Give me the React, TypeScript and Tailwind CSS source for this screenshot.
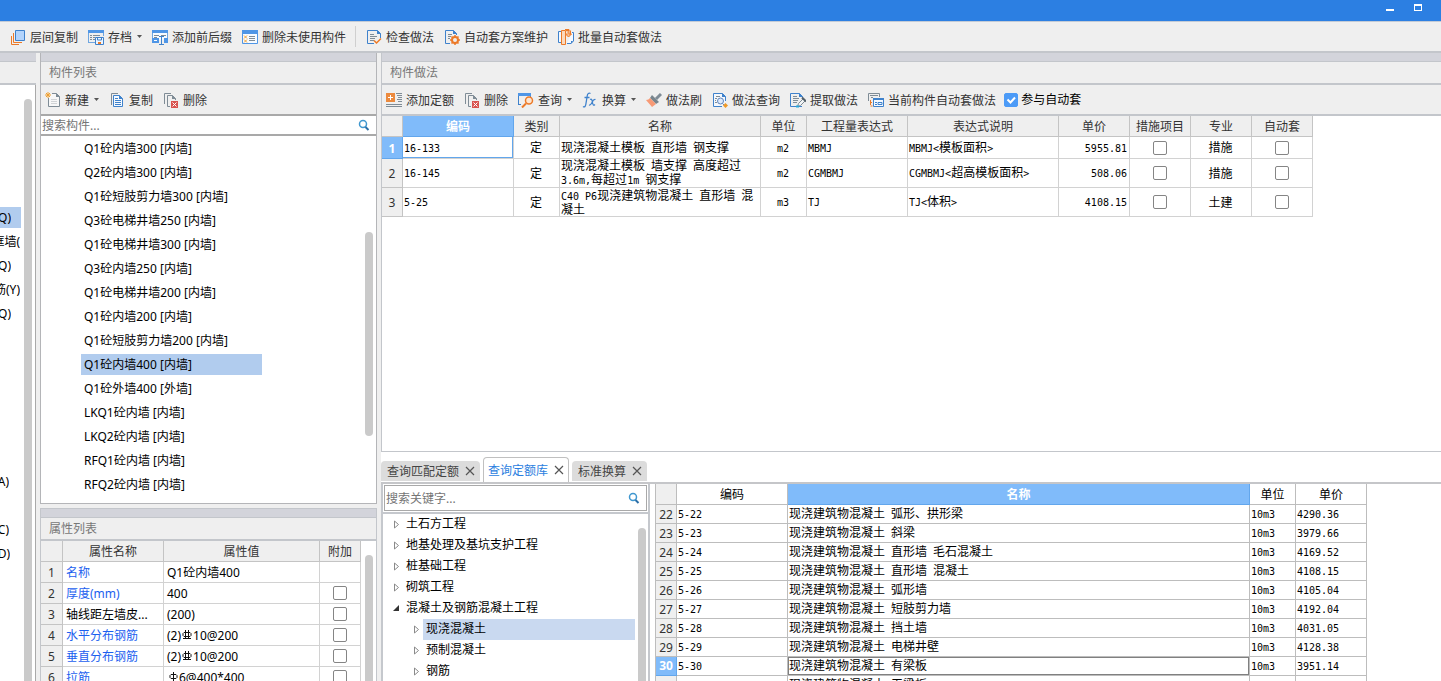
import { clsx } from "clsx";
import type { ReactNode } from "react";

type IconProps = { children: ReactNode };

function Icon({ children }: IconProps) {
  return (
    <svg viewBox="0 0 16 16" className="h-4 w-4 shrink-0" fill="none" aria-hidden>
      {children}
    </svg>
  );
}

const BLUE = "#3f82cc";
const GREY = "#7f8c96";
const ORANGE = "#ec7a28";

const docLines = (
  <path d="M4 5.5h4M4 7.5h7M4 9.5h5M4 11.5h4" stroke={GREY} />
);

const icons = {
  layers: (
    <Icon>
      <path d="M5.5 1.5h9v10h-9z" fill="#b3d4fc" stroke={BLUE} />
      <path d="M3.5 4v9.5H12M1.5 7v8.5H9" stroke={ORANGE} />
    </Icon>
  ),
  archive: (
    <Icon>
      <path d="M.5 14V1.5h15V7M.5 13.5H7" stroke="#6fa6e0" />
      <path d="M0 1h16v3H0z" fill="#4f96e6" />
      <path d="M2 6.5h2M2 8.5h2M2 10.5h2M5 6.5h7M5 8.5h2M5 10.5h2" stroke={GREY} />
      <path d="M7.5 8.5h8v7h-8z" fill="#eef5fd" stroke={BLUE} />
      <path d="M9.5 8.5h4V11h-4z" stroke={BLUE} />
      <path d="M10 13h3v2h-3z" fill={ORANGE} />
    </Icon>
  ),
  affix: (
    <Icon>
      <path d="M.5 11V1.5h15v9" fill="#f7fbff" stroke="#6fa6e0" />
      <path d="M0 1h16v3H0z" fill="#4f96e6" />
      <path d="M2 6.5h5M2 8.5h3M9 6.5h5" stroke={GREY} />
      <path d="M0 9h7v5H0zM12 9h4v5h-4z" fill="#4f96e6" />
      <path d="M2 11.5h3" stroke="#fff" />
      <path d="M7 7.5h5M9.5 7.5v8M7 15.5h5" stroke={BLUE} />
    </Icon>
  ),
  unused: (
    <Icon>
      <path d="M.5 1.5h15v13H.5z" fill="#f7fbff" stroke="#4f96e6" />
      <path d="M0 1h16v4H0z" fill="#4f96e6" />
      <path d="M7 7.5h6M7 9.5h6M7 11.5h6" stroke={GREY} />
      <path d="m2 6.5 3 3m0-3-3 3m0 1 3 3m0-3-3 3" stroke="#f0a030" />
    </Icon>
  ),
  check: (
    <Icon>
      <path d="M14.5 9V4.5l-3-3h-10v13H8" stroke={BLUE} />
      <path d="M11 1v4h4" fill={BLUE} />
      {docLines}
      <path d="m8 11.5 2.5 2.5L15 9.5" stroke={ORANGE} strokeWidth="1.5" />
    </Icon>
  ),
  gear: (
    <Icon>
      <path d="M12.5 6V4.5l-3-3h-8v13H6" stroke={BLUE} />
      <path d="M9 1v4h4" fill={BLUE} />
      <path d="M4 5.5h4M4 7.5h3M4 9.5h2" stroke={GREY} />
      <circle cx="11" cy="11" r="3" stroke={ORANGE} strokeWidth="2" />
      <path d="M11 6v2M11 14v2M6 11h2M14 11h2M7.5 7.5 9 9M13 13l1.5 1.5M14.5 7.5 13 9M9 13l-1.5 1.5" stroke={ORANGE} strokeWidth="1.5" />
    </Icon>
  ),
  batch: (
    <Icon>
      <path d="M3 2.5H.5v11H3M14 3.5h1.5V12L13 14.5H9" fill="#f4f9ff" stroke={BLUE} />
      <path d="M15 12h-2v3z" fill={BLUE} />
      <path d="M3.5 1.5h4v14h-4z" fill="#fbd9bd" stroke={ORANGE} />
      <path d="M7 .5h4L12.5 2v4" stroke={ORANGE} />
      <path d="M8 1.5h3V5h2.5l-3 3-3-3h2" fill="#f7b98c" stroke={ORANGE} />
    </Icon>
  ),
  create: (
    <Icon>
      <path d="M3.5 6v8.5h11V4.5l-3-3H7" fill="#f7f7f7" stroke={GREY} />
      <path d="M11 1v4h4" fill={GREY} />
      <path d="M6 7.5h6M6 9.5h6M6 11.5h6" stroke="#d0d3d6" />
      <path d="m1 1 4 4m0-4L1 5M3 0v6M0 3h6" stroke="#f0a030" />
    </Icon>
  ),
  copy: (
    <Icon>
      <path d="M2.5 13V1.5H9" stroke={GREY} />
      <path d="M4.5 3.5h6l3 3v8h-9z" fill="#f4f9ff" stroke={BLUE} />
      <path d="M10 3v4h4" fill={BLUE} />
      <path d="M6 8.5h6M6 10.5h6M6 12.5h6M6 6.5h3" stroke={BLUE} />
    </Icon>
  ),
  remove: (
    <Icon>
      <path d="M1.5 12V1.5H8M7 14.5H4.5v-11h5l3 3V8" stroke={GREY} />
      <path d="M9 3v4h4" fill={GREY} />
      <path d="M8 9h7v7H8z" fill="#d9534f" />
      <path d="m9.5 10.5 4 4m0-4-4 4" stroke="#fff" />
    </Icon>
  ),
  addQuota: (
    <Icon>
      <path d="M0 1h9v9H0z" fill="#ec8a3e" />
      <path d="M4.5 3v5M2 5.5h5" stroke="#fff" />
      <path d="M10 1.5h6M11 3.5h5M12 5.5h4M11 7.5h5M12 9.5h4M0 12.5h16M0 14.5h16" stroke={GREY} />
    </Icon>
  ),
  query: (
    <Icon>
      <path d="M.5 13V1.5h12V5M.5 12.5H3" stroke={BLUE} />
      <path d="M0 1h13v3H0z" fill="#4f96e6" />
      <circle cx="11" cy="8.5" r="3.5" fill="#fde6d2" stroke={ORANGE} strokeWidth="1.5" />
      <path d="m8 11.5-4 4" stroke={ORANGE} strokeWidth="2" />
    </Icon>
  ),
  fx: (
    <Icon>
      <path d="M8.5 1.5c-2-1-3 .5-3.3 2.500L3.800 12.500C3.500 14.500 2.500 15.500 1 14.500M2.500 5.500h5" stroke={BLUE} strokeWidth="1.300" />
      <path d="M8 7.500c2-1 2 .5 2.500 3s1 3.500 2.500 2M13.500 7.500c-2-.5-2.500 1-3.500 3s-1.500 3-3 2.500" stroke={BLUE} strokeWidth="1.200" />
    </Icon>
  ),
  brush: (
    <Icon>
      <path d="M15 2 10 7" stroke={GREY} strokeWidth="3" />
      <path d="m6 3 7 7-3 2-6-6z" fill="#78858d" />
      <path d="m4 6 6 6-4 3-6-7c2 0 3-1 4-2z" fill="#f79a76" />
    </Icon>
  ),
  find: (
    <Icon>
      <path d="M13.5 9V4.5l-3-3h-9v13H10" fill="#f4f8fd" stroke={BLUE} />
      <path d="M10 1v4h4" fill={BLUE} />
      <path d="M4 4.5h4M3 6.5h2M3 8.5h1M3 10.5h2" stroke={GREY} />
      <circle cx="8.5" cy="9" r="3" fill="#dce9fa" stroke="#5f86bd" />
      <path d="m10.5 11.5 2 2" stroke="#5f86bd" />
      <path d="m13.5 11 2.5 2.5-2.5 2.5-2.5-2.5z" fill="#f09a28" />
    </Icon>
  ),
  extract: (
    <Icon>
      <path d="M12.5 6V4.5l-3-3h-9v13H12" stroke={BLUE} />
      <path d="M9 1v4h4" fill={BLUE} />
      <path d="M3 4.5h4M3 6.5h6M3 8.5h5M3 10.5h4" stroke={GREY} />
      <path d="m7.5 14.5 1-3 5-5 2 2-5 5z" fill="#f2f4f5" stroke={GREY} />
      <path d="m12 5.5 4 4" stroke="#56626b" strokeWidth="2" />
      <path d="M6 14.5h3" stroke="#28a8d8" strokeWidth="2" />
    </Icon>
  ),
  auto: (
    <Icon>
      <path d="M.5 9V1.5h11V5" stroke={GREY} />
      <path d="M2 3.5h8M3 5.5h2" stroke={GREY} />
      <path d="M2.5 8v6H5M2 10.5h3" stroke={ORANGE} strokeDasharray="2 1" />
      <path d="M5.5 6.5h10v8h-10z" fill="#f4f9ff" stroke={BLUE} />
      <path d="M5 6h11v2H5z" fill={BLUE} />
      <path d="M7 10.5h2M7 12.5h2M10 10.5h4v2h-4z" stroke={BLUE} />
    </Icon>
  ),
};

type ToolProps = { icon: keyof typeof icons; label: string; menu?: boolean };

function Tool({ icon, label, menu }: ToolProps) {
  return (
    <button type="button" className="flex shrink-0 items-center whitespace-nowrap text-[#333]">
      {icons[icon]}
      <span className="ml-1 pt-0.5">{label}</span>
      {menu ? (
        <svg viewBox="0 0 5 3" className="ml-[5px] h-[3px] w-[5px]" aria-hidden>
          <path d="M0 0h5L2.5 3z" fill="#555" />
        </svg>
      ) : null}
    </button>
  );
}

// ASCII runs are set half as wide as the Chinese characters around them
function Grid({ text }: { text: string }) {
  return (
    <>
      {text.split(/([\x20-\x7e]+)/).map((run, i) =>
        i % 2 ? (
          <span key={i} className="whitespace-pre-wrap font-['DejaVu_Sans_Mono','Liberation_Mono',monospace] text-[10px]">
            {run}
          </span>
        ) : (
          run
        ),
      )}
    </>
  );
}

function CheckBox({ label, checked }: { label: string; checked?: boolean }) {
  return (
    <span className="grid place-items-center">
      <input
        type="checkbox"
        aria-label={label}
        defaultChecked={checked}
        className="peer col-start-1 row-start-1 h-3.5 w-3.5 appearance-none rounded-xs border border-[#858585] bg-white checked:border-[#4c9bf7] checked:bg-[#4c9bf7]"
      />
      <svg viewBox="0 0 14 14" className="pointer-events-none invisible col-start-1 row-start-1 h-3.5 w-3.5 peer-checked:visible" fill="none" aria-hidden>
        <path d="m3.5 6.5 3 3 4.5-5" stroke="#fff" strokeWidth="2" />
      </svg>
    </span>
  );
}

function SearchBox({ label, placeholder }: { label: string; placeholder: string }) {
  return (
    <div className="flex h-full items-center bg-white pl-px pr-1.5">
      <input
        type="text"
        aria-label={label}
        placeholder={placeholder}
        className="min-w-0 flex-1 bg-transparent pt-0.5 leading-4 outline-none placeholder:text-[#757575]"
      />
      <button type="button" aria-label="搜索" className="shrink-0">
        <svg viewBox="0 0 12 12" className="h-3 w-3" fill="none" aria-hidden>
          <circle cx="5" cy="5" r="3.5" stroke="#3f97cf" strokeWidth="1.5" />
          <path d="m7.5 8 3 3" stroke="#2b6fa8" strokeWidth="2" />
        </svg>
      </button>
    </div>
  );
}

function PanelTitle({ children }: { children?: ReactNode }) {
  return (
    <>
      <div className="h-2 shrink-0 bg-[#d3d4db]" />
      <h2 className="box-border h-6 shrink-0 border-t border-b-2 border-[#c3c6cb] bg-[#efefef] pl-2 leading-[21px] text-[#777]">
        {children}
      </h2>
    </>
  );
}

const categories = [
  { text: "(Q)", row: "mt-[122px]", width: "w-[11px]", selected: true },
  { text: "框墙(", row: "mt-[3px]", width: "w-5" },
  { text: "(Q)", row: "mt-[3px]", width: "w-[11px]" },
  { text: "筋(Y)", row: "mt-[3px]", width: "w-5" },
  { text: "(Q)", row: "mt-[3px]", width: "w-[11px]" },
  { text: "(A)", row: "mt-[147px]", width: "w-[9px]" },
  { text: "(C)", row: "mt-[27px]", width: "w-[9px]" },
  { text: "(D)", row: "mt-[3px]", width: "w-[10px]" },
];

function CategoryStrip() {
  return (
    <aside className="flex w-9 shrink-0 flex-col">
      <PanelTitle />
      <div className="flex min-h-0 flex-1 border-r border-[#a9a9a9] bg-white">
        <ul className="flex-1">
          {categories.map((item, i) => (
            <li key={i} className={clsx("h-[21px] w-[21px] leading-[21px]", item.row, item.selected && "bg-[#b1ccee]")}>
              <span className={clsx("flex justify-end overflow-hidden whitespace-nowrap", item.width)}>{item.text}</span>
            </li>
          ))}
        </ul>
        <div className="mr-[3px] mt-[14px] w-2 rounded-t-full bg-[#cacaca]" />
      </div>
    </aside>
  );
}

const components = [
  "Q1砼内墙300 [内墙]",
  "Q2砼内墙300 [内墙]",
  "Q1砼短肢剪力墙300 [内墙]",
  "Q3砼电梯井墙250 [内墙]",
  "Q1砼电梯井墙300 [内墙]",
  "Q3砼内墙250 [内墙]",
  "Q1砼电梯井墙200 [内墙]",
  "Q1砼内墙200 [内墙]",
  "Q1砼短肢剪力墙200 [内墙]",
  "Q1砼内墙400 [内墙]",
  "Q1砼外墙400 [外墙]",
  "LKQ1砼内墙 [内墙]",
  "LKQ2砼内墙 [内墙]",
  "RFQ1砼内墙 [内墙]",
  "RFQ2砼内墙 [内墙]",
];

function ComponentList() {
  return (
    <section className="flex shrink-0 flex-col border-x border-b border-[#b4b5b8]">
      <PanelTitle>构件列表</PanelTitle>
      <div className="flex h-[29px] items-center gap-2.5 bg-[#efefef] pl-1">
        <Tool icon="create" label="新建" menu />
        <Tool icon="copy" label="复制" />
        <Tool icon="remove" label="删除" />
      </div>
      <div className="h-[22px] border-t-2 border-b-2 border-[#a9a9a9]">
        <SearchBox label="搜索构件" placeholder="搜索构件..." />
      </div>
      <div className="flex bg-white pb-1.5 pt-px">
        <ul className="flex-1 pl-10">
          {components.map((name) => (
            <li key={name} className="h-6 pt-px">
              <div className={clsx("h-[21px] w-[181px] whitespace-nowrap pl-[3px] leading-[21px]", name === "Q1砼内墙400 [内墙]" && "bg-[#b1ccee]")}>
                {name}
              </div>
            </li>
          ))}
        </ul>
        <div className="mr-[3px] mt-[95px] h-[204px] w-2 rounded-full bg-[#cacaca]" />
      </div>
    </section>
  );
}

function Rebar({ double }: { double?: boolean }) {
  return (
    <svg viewBox="0 0 10 10" className="mx-px mb-1 inline h-2.5 w-2.5" fill="none" stroke="#111" aria-hidden>
      {double ? (
        <path d="M3.5 0v8M6.5 0v8M2 2.5h6l1 1v2l-1 1H2l-1-1v-2zM1 8.5h8" />
      ) : (
        <path d="M5.5 0v10M3 2.5h5l1 1v2l-1 1H3l-1-1v-2z" />
      )}
    </svg>
  );
}

const properties: { name: string; value: ReactNode; plain?: boolean; fixed?: boolean }[] = [
  { name: "名称", value: "Q1砼内墙400", fixed: true },
  { name: "厚度(mm)", value: "400" },
  { name: "轴线距左墙皮...", value: "(200)", plain: true },
  { name: "水平分布钢筋", value: <>(2)<Rebar double />10@200</> },
  { name: "垂直分布钢筋", value: <>(2)<Rebar double />10@200</> },
  { name: "拉筋", value: <><Rebar />6@400*400</> },
];

function PropertyList() {
  return (
    <section className="mt-1 flex min-h-0 flex-1 flex-col border-x border-t border-[#c3c6cb]">
      <PanelTitle>属性列表</PanelTitle>
      <div className="flex min-h-0 flex-1 bg-white">
        <table className="table-fixed border-separate border-spacing-0 self-start text-left [&_td]:h-[21px] [&_td]:border-b [&_td]:border-r [&_td]:border-[#d2d2d2] [&_td]:p-0 [&_th]:h-[21px] [&_th]:border-b [&_th]:border-r [&_th]:border-[#c4c4c4] [&_th]:bg-[#efefef] [&_th]:px-0 [&_th]:pb-0 [&_th]:pt-0.5 [&_th]:text-center [&_th]:font-normal [&_th]:text-[#333]">
          <colgroup>
            <col className="w-[22px]" />
            <col className="w-[101px]" />
            <col className="w-[156px]" />
            <col className="w-[41px]" />
          </colgroup>
          <thead>
            <tr>
              <th />
              <th scope="col">属性名称</th>
              <th scope="col">属性值</th>
              <th scope="col">附加</th>
            </tr>
          </thead>
          <tbody>
            {properties.map((item, i) => (
              <tr key={item.name}>
                <th scope="row">{i + 1}</th>
                <td>
                  <span className={clsx("block h-5 whitespace-nowrap pl-[3px] leading-[22px]", item.plain ? "text-black" : "text-[#1c5fef]")}>{item.name}</span>
                </td>
                <td>
                  <span className="block h-5 whitespace-nowrap pl-[3px] leading-[22px]">{item.value}</span>
                </td>
                <td>{item.fixed ? null : <CheckBox label={`附加 ${item.name}`} />}</td>
              </tr>
            ))}
          </tbody>
        </table>
        <div className="ml-1 mt-[14px] w-2 rounded-t-full bg-[#cacaca]" />
      </div>
    </section>
  );
}

const methods = [
  { code: "16-133", name: "现浇混凝土模板 直形墙 钢支撑", unit: "m2", expr: "MBMJ", note: "MBMJ<模板面积>", price: "5955.81", major: "措施", height: "h-[22px]" },
  { code: "16-145", name: "现浇混凝土模板 墙支撑 高度超过3.6m,每超过1m 钢支撑", unit: "m2", expr: "CGMBMJ", note: "CGMBMJ<超高模板面积>", price: "508.06", major: "措施", height: "h-[29px]" },
  { code: "5-25", name: "C40 P6现浇建筑物混凝土 直形墙 混凝土", unit: "m3", expr: "TJ", note: "TJ<体积>", price: "4108.15", major: "土建", height: "h-[29px]" },
];

function MethodTable() {
  return (
    <table className="w-[931px] table-fixed border-separate border-spacing-0 leading-[13px] [&_td]:border-b [&_td]:border-r [&_td]:border-[#d2d2d2] [&_td]:py-0 [&_td]:pl-px [&_td]:pr-0.5 [&_th]:border-b [&_th]:border-r [&_th]:px-0 [&_th]:pb-0 [&_th]:pt-px [&_th]:font-normal">
      <colgroup>
        <col className="w-[21px]" />
        <col className="w-[111px]" />
        <col className="w-[46px]" />
        <col className="w-[201px]" />
        <col className="w-[46px]" />
        <col className="w-[101px]" />
        <col className="w-[151px]" />
        <col className="w-[71px]" />
        <col className="w-[61px]" />
        <col className="w-[61px]" />
        <col className="w-[61px]" />
      </colgroup>
      <thead>
        <tr className="h-[21px] text-[#333]">
          {["", "编码", "类别", "名称", "单位", "工程量表达式", "表达式说明", "单价", "措施项目", "专业", "自动套"].map((head) => (
            <th
              key={head}
              scope="col"
              className={head === "编码" ? "border-[#62a6ec] bg-[#80bbfa] text-white" : "border-[#c4c4c4] bg-[#efefef]"}
            >
              {head === "编码" ? <b>{head}</b> : head}
            </th>
          ))}
        </tr>
      </thead>
      <tbody>
        {methods.map((row, i) => (
          <tr key={row.code} className={row.height}>
            <th scope="row" className={i === 0 ? "border-[#62a6ec] bg-[#80bbfa] text-white" : "border-[#c4c4c4] bg-[#efefef] text-[#333]"}>
              {i === 0 ? <b>1</b> : i + 1}
            </th>
            <td className={clsx(i === 0 && "shadow-[inset_-1px_-1px_0_#62a6ec]")}>
              <Grid text={row.code} />
            </td>
            <td className="text-center">定</td>
            <td>
              <Grid text={row.name} />
            </td>
            <td className="text-center">
              <Grid text={row.unit} />
            </td>
            <td>
              <Grid text={row.expr} />
            </td>
            <td>
              <Grid text={row.note} />
            </td>
            <td className="text-right">
              <Grid text={row.price} />
            </td>
            <td>
              <CheckBox label={`措施项目 ${row.code}`} />
            </td>
            <td className="text-center">{row.major}</td>
            <td>
              <CheckBox label={`自动套 ${row.code}`} />
            </td>
          </tr>
        ))}
      </tbody>
    </table>
  );
}

const tabs = [
  { name: "查询匹配定额", active: false },
  { name: "查询定额库", active: true },
  { name: "标准换算", active: false },
];

function QueryTabs() {
  return (
    <div role="tablist" className="flex h-8 shrink-0 items-end gap-[3px] border-b-2 border-[#c5c6c9]">
      {tabs.map((tab) => (
        <div
          key={tab.name}
          className={clsx(
            "flex items-center gap-1.5 rounded-t",
            tab.active
              ? "h-[25px] border border-b-0 border-[#c0c0c0] bg-white px-1 text-[#2b7ee0]"
              : "mb-px h-5 bg-[#dcdcdc] pl-1.5 pr-[5px] text-[#444]",
          )}
        >
          <button type="button" role="tab" aria-selected={tab.active} className="whitespace-nowrap pt-0.5">
            {tab.name}
          </button>
          <button type="button" aria-label={`关闭 ${tab.name}`}>
            <svg viewBox="0 0 10 10" className="h-2.5 w-2.5" stroke="#555" aria-hidden>
              <path d="m1 1 8 8m0-8-8 8" strokeWidth="1.2" />
            </svg>
          </button>
        </div>
      ))}
    </div>
  );
}

const chapters = [
  { name: "土石方工程" },
  { name: "地基处理及基坑支护工程" },
  { name: "桩基础工程" },
  { name: "砌筑工程" },
  { name: "混凝土及钢筋混凝土工程", open: true },
  { name: "现浇混凝土", child: true, selected: true },
  { name: "预制混凝土", child: true },
  { name: "钢筋", child: true },
];

function ChapterTree() {
  return (
    <div className="flex w-[269px] shrink-0 flex-col border-x-2 border-[#c5c8cd]">
      <div className="h-[30px] shrink-0 border-b-2 border-[#c5c8cd] px-px py-px">
        <div className="h-[26px] border border-[#a9a9a9]">
          <SearchBox label="搜索关键字" placeholder="搜索关键字..." />
        </div>
      </div>
      <div className="flex min-h-0 flex-1 overflow-hidden">
        <ul role="tree" aria-label="定额章节" className="flex-1">
          {chapters.map((item) => (
            <li
              key={item.name}
              role="treeitem"
              aria-selected={Boolean(item.selected)}
              className={clsx("flex h-[21px] items-center", item.child ? "pl-[29px]" : "pl-[9px]")}
            >
              <svg viewBox="0 0 9 9" className="h-[9px] w-[9px] shrink-0" aria-hidden>
                {item.open ? (
                  <path d="M7 1v6H1z" fill="#333" />
                ) : (
                  <path d="M2.5 1v7l4-3.5z" fill="#fff" stroke="#8a8a8a" />
                )}
              </svg>
              <span className={clsx("ml-0.5 h-[21px] flex-1 whitespace-nowrap pl-[3px] leading-[19px]", item.selected && "bg-[#c9d9f0]")}>
                {item.name}
              </span>
            </li>
          ))}
        </ul>
        <div className="ml-[3px] mr-0.5 mt-[14px] w-2 rounded-t-full bg-[#cacaca]" />
      </div>
    </div>
  );
}

const quotas = [
  ["22", "5-22", "现浇建筑物混凝土 弧形、拱形梁", "4290.36"],
  ["23", "5-23", "现浇建筑物混凝土 斜梁", "3979.66"],
  ["24", "5-24", "现浇建筑物混凝土 直形墙 毛石混凝土", "4169.52"],
  ["25", "5-25", "现浇建筑物混凝土 直形墙 混凝土", "4108.15"],
  ["26", "5-26", "现浇建筑物混凝土 弧形墙", "4105.04"],
  ["27", "5-27", "现浇建筑物混凝土 短肢剪力墙", "4192.04"],
  ["28", "5-28", "现浇建筑物混凝土 挡土墙", "4031.05"],
  ["29", "5-29", "现浇建筑物混凝土 电梯井壁", "4128.38"],
  ["30", "5-30", "现浇建筑物混凝土 有梁板", "3951.14"],
  ["31", "5-31", "现浇建筑物混凝土 无梁板", "3877.81"],
];

function QuotaTable() {
  return (
    <table className="ml-[5px] w-[712px] shrink-0 table-fixed self-start border-separate border-spacing-0 border-l border-[#bdbdbd] text-left leading-4 [&_td]:border-b [&_td]:border-r [&_td]:border-[#bdbdbd] [&_td]:px-px [&_td]:py-0 [&_th]:border-b [&_th]:border-r [&_th]:p-0 [&_th]:text-center [&_th]:font-normal">
      <colgroup>
        <col className="w-[21px]" />
        <col className="w-[111px]" />
        <col className="w-[462px]" />
        <col className="w-[46px]" />
        <col className="w-[71px]" />
      </colgroup>
      <thead>
        <tr className="h-[21px]">
          <th className="border-[#bdbdbd] bg-[#efefef]" />
          <th scope="col" className="border-[#bdbdbd]"><span className="block pt-0.5">编码</span></th>
          <th scope="col" className="border-[#62a6ec] bg-[#80bbfa] text-white"><b className="block pt-0.5">名称</b></th>
          <th scope="col" className="border-[#bdbdbd]"><span className="block pt-0.5">单位</span></th>
          <th scope="col" className="border-[#bdbdbd]"><span className="block pt-0.5">单价</span></th>
        </tr>
      </thead>
      <tbody>
        {quotas.map(([no, code, name, price]) => (
          <tr key={no} className="h-[19px]">
            <th scope="row" className={no === "30" ? "border-[#62a6ec] bg-[#80bbfa] text-white" : "border-[#bdbdbd] bg-[#efefef] text-[#333]"}>
              {no === "30" ? <b>{no}</b> : <span className="block pt-0.5">{no}</span>}
            </th>
            <td>
              <Grid text={code} />
            </td>
            <td className={clsx(no === "30" && "shadow-[inset_0_0_0_1px_#808080]")}>
              <Grid text={name} />
            </td>
            <td>
              <Grid text="10m3" />
            </td>
            <td>
              <Grid text={price} />
            </td>
          </tr>
        ))}
      </tbody>
    </table>
  );
}

export default function App() {
  return (
    <div className="flex h-screen flex-col overflow-hidden bg-[#efefef] font-['Noto_Sans','Noto_Sans_CJK_SC',sans-serif] text-xs text-black">
      <header className="flex h-[21px] shrink-0 justify-end gap-5 bg-[#2c7fe2] pr-[19px] pt-1">
        <button type="button" aria-label="最小化" className="flex h-[7px] w-2 items-end">
          <span className="h-0.5 w-2 bg-white" />
        </button>
        <button type="button" aria-label="最大化" className="h-[7px] w-2 border border-t-2 border-white" />
      </header>

      <nav className="flex h-[30px] shrink-0 items-center gap-2.5 border-t border-[#c3cbd6] pl-2.5">
        <Tool icon="layers" label="层间复制" />
        <Tool icon="archive" label="存档" menu />
        <Tool icon="affix" label="添加前后缀" />
        <Tool icon="unused" label="删除未使用构件" />
        <span className="-ml-px h-[21px] w-px bg-[#cfcfcf]" />
        <Tool icon="check" label="检查做法" />
        <Tool icon="gear" label="自动套方案维护" />
        <Tool icon="batch" label="批量自动套做法" />
      </nav>

      <main className="flex min-h-0 flex-1 border-t-2 border-[#c3c6cb]">
        <CategoryStrip />

        <div className="ml-1 flex w-[337px] shrink-0 flex-col">
          <ComponentList />
          <PropertyList />
        </div>

        <div className="ml-1 flex min-w-0 flex-1 flex-col">
          <section className="flex min-h-0 flex-1 flex-col border-b border-l border-[#c3c6cb]">
            <PanelTitle>构件做法</PanelTitle>
            <div className="flex h-[31px] shrink-0 items-center gap-2.5 border-b-2 border-[#c3c6cb] pl-1">
              <Tool icon="addQuota" label="添加定额" />
              <Tool icon="remove" label="删除" />
              <Tool icon="query" label="查询" menu />
              <Tool icon="fx" label="换算" menu />
              <Tool icon="brush" label="做法刷" />
              <Tool icon="find" label="做法查询" />
              <Tool icon="extract" label="提取做法" />
              <Tool icon="auto" label="当前构件自动套做法" />
              <label className="-ml-0.5 flex items-center gap-[3px] whitespace-nowrap">
                <CheckBox label="参与自动套" checked />
                参与自动套
              </label>
            </div>
            <div className="min-h-0 flex-1 bg-white">
              <MethodTable />
            </div>
          </section>

          <section className="flex h-[229px] shrink-0 flex-col bg-white">
            <QueryTabs />
            <div className="flex min-h-0 flex-1 overflow-hidden">
              <ChapterTree />
              <QuotaTable />
            </div>
          </section>
        </div>
      </main>
    </div>
  );
}
